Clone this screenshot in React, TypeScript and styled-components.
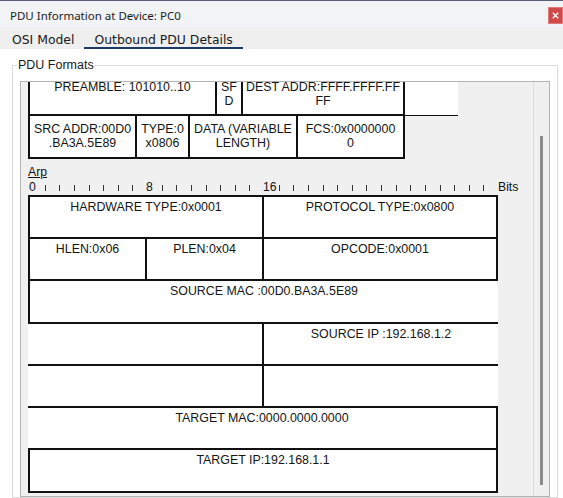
import React, { useLayoutEffect, useRef } from "react";
import styled, { createGlobalStyle } from "styled-components";

const GlobalStyle = createGlobalStyle`
  html, body { margin: 0; padding: 0; background: #ffffff; }
  body { font-family: "Liberation Sans", Arial, sans-serif; }
`;

const Window = styled.div`
  width: 563px;
  height: 498px;
  overflow: hidden;
  display: flex;
  flex-direction: column;
  background: #ffffff;
`;

const TitleBar = styled.div`
  flex: none;
  height: 26px;
  border-top: 1px solid #566074;
  background: #f2f3f5;
  display: flex;
  align-items: flex-start;
`;

const Title = styled.div`
  padding: 8px 0 0 10px;
  font-family: "Noto Sans", "Liberation Sans", sans-serif;
  font-size: 11.5px;
  line-height: 14px;
  color: #1b1b1b;
`;

const CloseButton = styled.div`
  margin: 6px 0 0 auto;
  width: 15px;
  height: 17px;
  box-sizing: border-box;
  background: #d04a4a;
  border: 1px solid #e07a7a;
  display: flex;
  align-items: center;
  justify-content: center;
`;

const TabBar = styled.div`
  flex: none;
  height: 22px;
  background: #efefef;
  display: flex;
  padding-left: 2px;
`;

const Tab = styled.div<{ $active?: boolean }>`
  box-sizing: border-box;
  height: 22px;
  padding: 6px 10px 0 10px;
  font-family: "DejaVu Sans", Verdana, sans-serif;
  font-size: 12.4px;
  line-height: 14px;
  color: #1a1a1a;
  border-bottom: 2px solid ${(p) => (p.$active ? "#1c3a66" : "transparent")};
`;

const Body = styled.div`
  flex: 1;
  padding-top: 9px;
  min-height: 0;
`;

const GroupBox = styled.fieldset`
  margin: 0 5px 0 12px;
  padding: 9px 7px 0 7px;
  border: 1px solid #dadada;
  min-width: 0;
`;

const GroupLegend = styled.legend`
  margin-left: -3px;
  padding: 0 1px;
  font-size: 12.5px;
  line-height: 14px;
  color: #1a1a1a;
`;

const ScrollPane = styled.div`
  height: 416px;
  box-sizing: border-box;
  border: 1px solid #b4b4b4;
  background: #f0f0f0;
  display: flex;
`;

const Viewport = styled.div`
  flex: 1;
  overflow: hidden;
  padding-left: 7px;
`;

const Content = styled.div`
  padding: 0 0 60px 0;
  display: flex;
  flex-direction: column;
  align-items: flex-start;
`;

const ScrollTrack = styled.div`
  flex: none;
  width: 16px;
  box-sizing: border-box;
  border-left: 1px solid #dcdcdc;
  padding: 54px 0 0 6px;
`;

const Thumb = styled.div`
  width: 3px;
  height: 349px;
  background: #8b8b8b;
`;

const SectionLabel = styled.div<{ $gap: number }>`
  margin-top: ${(p) => p.$gap}px;
  font-size: 12.2px;
  line-height: 14px;
  color: #111;
  text-decoration: underline;
`;

const RulerRow = styled.div`
  margin-top: 1px;
  display: flex;
  align-items: flex-end;
  height: 14px;
  font-size: 12.2px;
  line-height: 14px;
  color: #111;
`;

const Slot = styled.div<{ $w: number }>`
  flex: none;
  width: ${(p) => p.$w}px;
  height: 14px;
  display: flex;
  align-items: flex-end;
  white-space: nowrap;
`;

const Num = styled.span`
  padding-left: 1px;
`;

const Tick = styled.span`
  display: block;
  width: 1px;
  height: 6px;
  margin: 0 0 3px 2px;
  background: #333;
`;

const Unit = styled.span`
  margin-left: 2px;
`;

const Table = styled.div<{ $gap?: number }>`
  margin-top: ${(p) => p.$gap ?? 0}px;
  display: flex;
  flex-direction: column;
`;

const Row = styled.div<{ $h: number }>`
  display: flex;
  height: ${(p) => p.$h}px;
`;

const bw = (sides: string, s: string, thin?: boolean) =>
  sides.includes(s) ? (thin ? 1 : 2) : 0;

const Cell = styled.div<{ $w: number; $sides: string; $pad: number; $thin?: boolean }>`
  box-sizing: border-box;
  flex: none;
  width: ${(p) => p.$w}px;
  height: 100%;
  background: #ffffff;
  border-style: solid;
  border-color: #111;
  border-top-width: ${(p) => bw(p.$sides, "t", p.$thin)}px;
  border-right-width: ${(p) => bw(p.$sides, "r", p.$thin)}px;
  border-bottom-width: ${(p) => bw(p.$sides, "b", p.$thin)}px;
  border-left-width: ${(p) => bw(p.$sides, "l", p.$thin)}px;
  padding-top: ${(p) => p.$pad}px;
  text-align: center;
  white-space: nowrap;
  font-size: 12.4px;
  line-height: 14px;
  color: #151515;
`;

type CellDef = { w: number; sides: string; text?: string[]; thin?: boolean };
type RowDef = { h: number; cells: CellDef[] };

const ethernetRows: RowDef[] = [
  {
    h: 44,
    cells: [
      { w: 189, sides: "trbl", text: ["PREAMBLE: 101010..10"] },
      { w: 26, sides: "trb", text: ["SF", "D"] },
      { w: 162, sides: "trb", text: ["DEST ADDR:FFFF.FFFF.FF", "FF"] },
      { w: 53, sides: "tb", thin: true },
    ],
  },
  {
    h: 43,
    cells: [
      { w: 109, sides: "rbl", text: ["SRC ADDR:00D0", ".BA3A.5E89"] },
      { w: 53, sides: "rb", text: ["TYPE:0", "x0806"] },
      { w: 108, sides: "rb", text: ["DATA (VARIABLE", "LENGTH)"] },
      { w: 107, sides: "rb", text: ["FCS:0x0000000", "0"] },
    ],
  },
];

const arpRows: RowDef[] = [
  {
    h: 44,
    cells: [
      { w: 236, sides: "trbl", text: ["HARDWARE TYPE:0x0001"] },
      { w: 234, sides: "trb", text: ["PROTOCOL TYPE:0x0800"] },
    ],
  },
  {
    h: 42,
    cells: [
      { w: 119, sides: "rbl", text: ["HLEN:0x06"] },
      { w: 117, sides: "rb", text: ["PLEN:0x04"] },
      { w: 234, sides: "rb", text: ["OPCODE:0x0001"] },
    ],
  },
  { h: 43, cells: [{ w: 470, sides: "bl", text: ["SOURCE MAC :00D0.BA3A.5E89"] }] },
  {
    h: 42,
    cells: [
      { w: 236, sides: "rb" },
      { w: 234, sides: "b", text: ["SOURCE IP :192.168.1.2"] },
    ],
  },
  {
    h: 42,
    cells: [
      { w: 236, sides: "rb" },
      { w: 234, sides: "b" },
    ],
  },
  { h: 42, cells: [{ w: 470, sides: "rb", text: ["TARGET MAC:0000.0000.0000"] }] },
  { h: 43, cells: [{ w: 470, sides: "rbl", text: ["TARGET IP:192.168.1.1"] }] },
];

function FieldTable({ rows, pad, gap }: { rows: RowDef[]; pad: number; gap?: number }) {
  return (
    <Table $gap={gap}>
      {rows.map((row, ri) => (
        <Row key={ri} $h={row.h}>
          {row.cells.map((c, ci) => (
            <Cell key={ci} $w={c.w} $sides={c.sides} $pad={pad} $thin={c.thin}>
              {(c.text ?? []).map((line, li) => (
                <React.Fragment key={li}>
                  {li > 0 && <br />}
                  {line}
                </React.Fragment>
              ))}
            </Cell>
          ))}
        </Row>
      ))}
    </Table>
  );
}

function Ruler({ count, slot, labels, unit }: { count: number; slot: number; labels: Record<number, string>; unit: string }) {
  return (
    <RulerRow>
      {Array.from({ length: count }, (_, i) => (
        <Slot key={i} $w={slot}>{labels[i] !== undefined ? <Num>{labels[i]}</Num> : <Tick />}</Slot>
      ))}
      <Unit>{unit}</Unit>
    </RulerRow>
  );
}

export default function App() {
  const vpRef = useRef<HTMLDivElement>(null);

  useLayoutEffect(() => {
    const vp = vpRef.current;
    if (!vp) return;
    // the pane is scrolled a little: the top of the Ethernet frame lies above the view
    vp.scrollTop = 10;
  }, []);

  return (
    <>
      <GlobalStyle />
      <Window>
        <TitleBar>
          <Title>PDU Information at Device: PC0</Title>
          <CloseButton>
            <svg width="7" height="7" viewBox="0 0 7 7">
              <path d="M0.8 0.8 L6.2 6.2 M6.2 0.8 L0.8 6.2" stroke="#ffffff" strokeWidth="1.4" fill="none" />
            </svg>
          </CloseButton>
        </TitleBar>
        <TabBar>
          <Tab>OSI Model</Tab>
          <Tab $active>Outbound PDU Details</Tab>
        </TabBar>
        <Body>
          <GroupBox>
            <GroupLegend>PDU Formats</GroupLegend>
            <ScrollPane>
              <Viewport ref={vpRef}>
                <Content>
                  <FieldTable rows={ethernetRows} pad={6} />
                  <SectionLabel $gap={6}>Arp</SectionLabel>
                  <Ruler count={32} slot={14.625} labels={{ 0: "0", 8: "8", 16: "16" }} unit="Bits" />
                  <FieldTable rows={arpRows} pad={3} gap={1} />
                </Content>
              </Viewport>
              <ScrollTrack>
                <Thumb />
              </ScrollTrack>
            </ScrollPane>
          </GroupBox>
        </Body>
      </Window>
    </>
  );
}
